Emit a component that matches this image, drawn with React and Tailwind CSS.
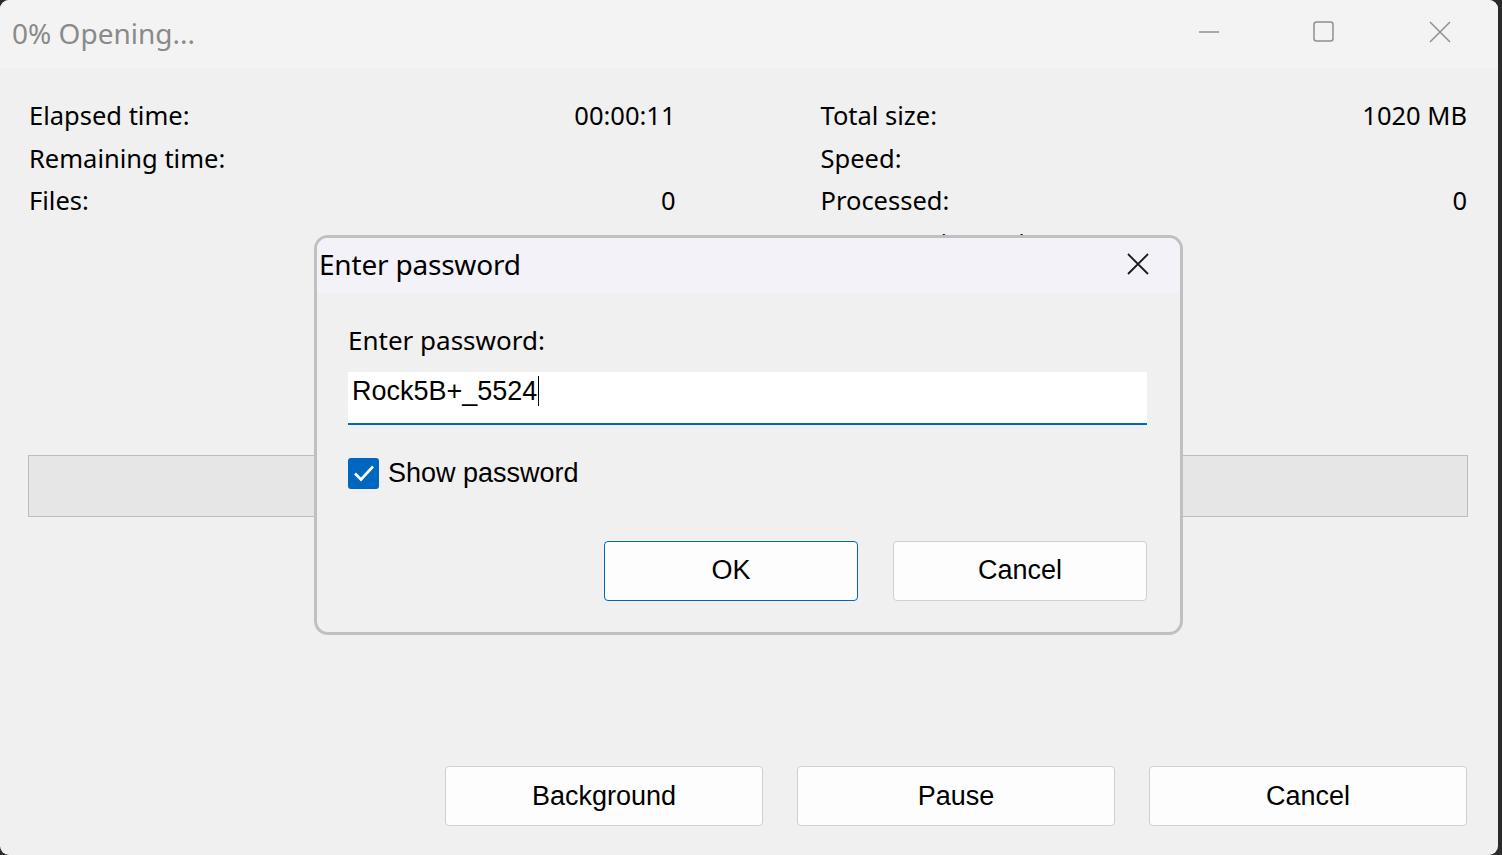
import React from 'react';

const seg = { fontFamily: '"Noto Sans", "Open Sans", sans-serif' };
const arial = { fontFamily: '"Liberation Sans", Arial, sans-serif' };

function Row({ label, value }) {
    return (
        <div className="flex items-center justify-between h-[42.5px]">
            <span>{label}</span>
            <span>{value}</span>
        </div>
    );
}

function WinButton({ children, primary, className = '' }) {
    return (
        <button
            style={arial}
            className={`h-[60px] rounded-[4px] bg-[#fdfdfd] text-[27px] text-black border ${primary ? 'border-[#0067c0]' : 'border-[#d0d0d0]'} ${className}`}
        >
            {children}
        </button>
    );
}

function PasswordDialog() {
    return (
        <div className="absolute left-[314px] top-[235px] w-[869px] h-[400px] border-[3px] border-[#c0c0c0] rounded-[14px] overflow-hidden bg-[#f0f0f0] flex flex-col">
            <div className="h-[55px] bg-[#f3f2f8] flex items-center justify-between pl-[2px] pr-[31px]">
                <span style={seg} className="text-[28px] text-black tracking-[-0.2px] -mt-[3px]">Enter password</span>
                <svg width="22" height="22" viewBox="0 0 22 22" className="-mt-[3px]">
                    <path d="M1 1L21 21M21 1L1 21" stroke="#1a1a1a" strokeWidth="1.8" />
                </svg>
            </div>
            <div className="flex flex-col pl-[31px] pr-[33px] pt-[32px]">
                <div style={seg} className="text-[26px] text-black leading-[30px]">Enter password:</div>
                <div className="mt-[17px] h-[53px] bg-white border-b-2 border-[#0067c0] flex items-start pt-[3px] pl-[4px]">
                    <span style={arial} className="text-[27px] text-black leading-[32px]">Rock5B+_5524</span>
                    <span className="w-px h-[30px] bg-black ml-[1px] mt-[1px]"></span>
                </div>
                <div className="mt-[28px] flex items-center gap-[9px]">
                    <div className="w-[31px] h-[31px] rounded-[3px] bg-[#0067c0] flex items-center justify-center">
                        <svg width="22" height="18" viewBox="0 0 22 18">
                            <path d="M2 9.5L8 15.5L20 2.5" stroke="white" strokeWidth="2.6" fill="none" />
                        </svg>
                    </div>
                    <span style={arial} className="text-[27px] text-black">Show password</span>
                </div>
                <div className="mt-[47px] flex justify-end gap-[35px]">
                    <WinButton primary className="w-[254px]">OK</WinButton>
                    <WinButton className="w-[254px]">Cancel</WinButton>
                </div>
            </div>
        </div>
    );
}

export default function App() {
    return (
        <div className="w-[1502px] h-[855px] bg-[#2b2b2b] overflow-hidden">
            <div className="relative w-[1498px] h-[855px] rounded-[9px] overflow-hidden bg-[#f0f0f0] flex flex-col">
                <div className="h-[68px] bg-[#f3f3f3] flex items-center justify-between pl-[12px]">
                    <span style={seg} className="text-[28px] text-[#8a8a8a] -mt-[2px]">0% Opening...</span>
                    <div className="flex items-center h-full -mt-[4px]">
                        <div className="w-[115px] h-full flex items-center justify-center">
                            <svg width="22" height="22" viewBox="0 0 22 22">
                                <path d="M1 11H21" stroke="#8f8f8f" strokeWidth="1.5" />
                            </svg>
                        </div>
                        <div className="w-[115px] h-full flex items-center justify-center">
                            <svg width="22" height="22" viewBox="0 0 22 22">
                                <rect x="1" y="1" width="19" height="19" rx="2.5" stroke="#8f8f8f" strokeWidth="1.5" fill="none" />
                            </svg>
                        </div>
                        <div className="w-[117px] h-full flex items-center justify-center">
                            <svg width="22" height="22" viewBox="0 0 22 22">
                                <path d="M1 1L21 21M21 1L1 21" stroke="#8f8f8f" strokeWidth="1.5" />
                            </svg>
                        </div>
                    </div>
                </div>

                <div style={seg} className="grid grid-cols-2 gap-x-[145px] pl-[29px] pr-[31px] pt-[26px] text-[25.5px] text-black">
                    <div className="flex flex-col">
                        <Row label="Elapsed time:" value="00:00:11" />
                        <Row label="Remaining time:" value="" />
                        <Row label="Files:" value="0" />
                    </div>
                    <div className="flex flex-col">
                        <Row label="Total size:" value="1020 MB" />
                        <Row label="Speed:" value="" />
                        <Row label="Processed:" value="0" />
                        <Row label="Compression ratio:" value="" />
                    </div>
                </div>

                <div className="mx-[30px] ml-[28px] mt-[191px] h-[62px] bg-[#e6e6e6] border border-[#bcbcbc]"></div>

                <div className="mt-auto mb-[29px] flex justify-end gap-[34px] pr-[31px]">
                    <WinButton className="w-[318px]">Background</WinButton>
                    <WinButton className="w-[318px]">Pause</WinButton>
                    <WinButton className="w-[318px]">Cancel</WinButton>
                </div>

                <PasswordDialog />
            </div>
        </div>
    );
}
